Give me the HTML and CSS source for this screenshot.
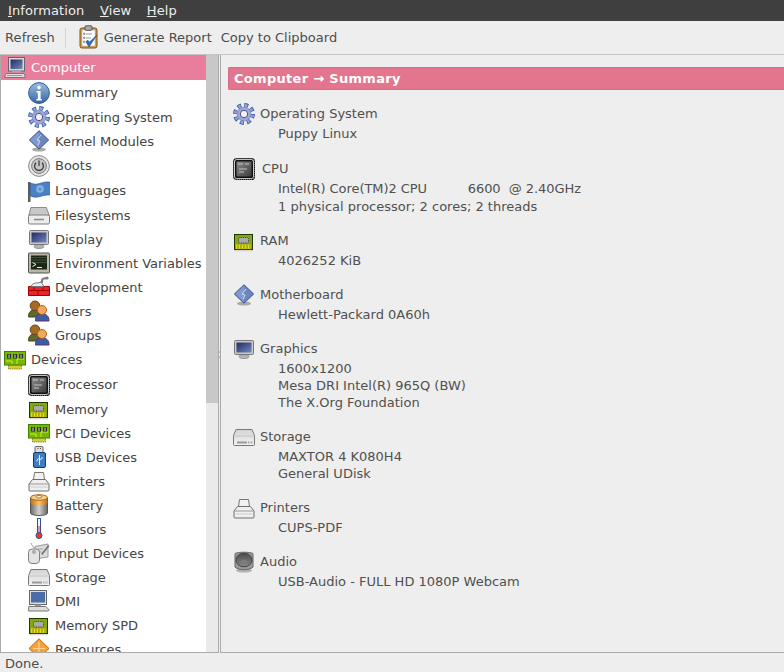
FILE: index.html
```html
<!DOCTYPE html>
<html lang="en">
<head>
<meta charset="utf-8">
<title>System Information</title>
<link rel="stylesheet" href="styles.css">
</head>
<body>
<svg class="defs" xmlns="http://www.w3.org/2000/svg">
<defs>
<linearGradient id="gBlue" x1="0" y1="0" x2="1" y2="1"><stop offset="0" stop-color="#232a63"/><stop offset="1" stop-color="#7288bc"/></linearGradient>
<linearGradient id="gInfo" x1="0" y1="0" x2="0" y2="1"><stop offset="0" stop-color="#9dbde4"/><stop offset="1" stop-color="#3465a4"/></linearGradient>
<linearGradient id="gGrey" x1="0" y1="0" x2="1" y2="0"><stop offset="0" stop-color="#6a6a6a"/><stop offset=".5" stop-color="#d0d0d0"/><stop offset="1" stop-color="#666"/></linearGradient>
<linearGradient id="gOrange" x1="0" y1="0" x2="1" y2="0"><stop offset="0" stop-color="#b86f1c"/><stop offset=".5" stop-color="#fbc46a"/><stop offset="1" stop-color="#b86f1c"/></linearGradient>
<linearGradient id="gChip" x1="0" y1="0" x2="1" y2="1"><stop offset="0" stop-color="#8c8c8c"/><stop offset="1" stop-color="#3c3c3c"/></linearGradient>
<linearGradient id="gDisk" x1="0" y1="0" x2="0" y2="1"><stop offset="0" stop-color="#d4d4d4"/><stop offset="1" stop-color="#f2f2f2"/></linearGradient>
<linearGradient id="gSpk" x1="0" y1="0" x2="0" y2="1"><stop offset="0" stop-color="#4a4a4a"/><stop offset="1" stop-color="#8a8a8a"/></linearGradient>
<symbol id="computer" viewBox="0 0 22 22"><rect x="4.500" y=".5" width="16" height="13.500" fill="#d8d8d8" stroke="#666"/><rect x="6.500" y="2.500" width="12" height="9.500" fill="url(#gBlue)"/><rect x="8" y="14" width="9" height="1.500" fill="#aaa"/><path d="M2 16.500h18l1.500 4H.5z" fill="#ddd" stroke="#777"/><path d="M3 18.500h15" stroke="#999"/></symbol>
<symbol id="info" viewBox="0 0 22 22"><circle cx="11" cy="11" r="10.400" fill="url(#gInfo)" stroke="#2c5a99"/><circle cx="11" cy="5.600" r="1.800" fill="#fff"/><path d="M8.600 9h4v8h1.200v1.400H8.400V17h1.400v-6.600H8.600z" fill="#fff"/></symbol>
<symbol id="gear" viewBox="0 0 22 22"><circle cx="11" cy="11" r="8.500" fill="none" stroke="#3a66b4" stroke-width="5" stroke-dasharray="3.800 2.876"/><circle cx="11" cy="11" r="8.500" fill="none" stroke="#9da3d6" stroke-width="3" stroke-dasharray="2.200 4.476" stroke-dashoffset="-.8"/><circle cx="11" cy="11" r="7" fill="#a0a6d8" stroke="#6f7fc0" stroke-width=".6"/><circle cx="11" cy="11" r="3.700" fill="#f2f2f2" stroke="#50508a"/></symbol>
<symbol id="module" viewBox="0 0 22 22"><ellipse cx="11" cy="19.500" rx="7" ry="2" fill="#aaa"/><path d="M11 .8 20.600 10 11 19.200 1.400 10z" fill="#8099cf" stroke="#2f4a86"/><path d="M11 .8 20.600 10 11 19.200z" fill="#4e6cab" opacity=".4"/><path d="M13 5 9 10l3 1-2 4" fill="none" stroke="#d4def4" stroke-width="1"/></symbol>
<symbol id="boot" viewBox="0 0 22 22"><circle cx="11" cy="11" r="10.400" fill="#e6e6e6" stroke="#888"/><circle cx="11" cy="11" r="7.400" fill="#c6c6c6" stroke="#777"/><path d="M8 7.800a4.400 4.400 0 1 0 6 0M11 5.500V11" fill="none" stroke="#333" stroke-width="1.200"/></symbol>
<symbol id="flag" viewBox="0 0 22 22"><path d="M0 2h2.500v20H0z" fill="#5c5c5c"/><path d="M2.500 3c3.500 1.500 6 1.500 9 .5s6-1.800 10-1.500v13c-4-.3-6.500 .6-9.500 1.500s-6 1-9.500-.5z" fill="#4b82c5" stroke="#2a5a96" stroke-width=".7"/><circle cx="12" cy="9" r="3.800" fill="#8db3df"/><circle cx="12" cy="9" r="1.800" fill="#5f93d0"/></symbol>
<symbol id="hdd" viewBox="0 0 22 22"><path d="M2.800 3.500h15.500l3 8H.8z" fill="#c8c8c8" stroke="#8a8a8a"/><rect x=".5" y="11" width="21" height="9" rx="1.500" fill="#ececec" stroke="#7c7c7c"/><path d="M6 15.500h10" stroke="#888" stroke-width="1.500"/></symbol>
<symbol id="display" viewBox="0 0 22 22"><ellipse cx="11" cy="18.500" rx="5" ry="2" fill="#b4b4b4" stroke="#999"/><rect x="1.500" y="2.500" width="19" height="14" rx="1" fill="#c9c9c9" stroke="#777"/><rect x="3.500" y="4.500" width="15" height="10" fill="url(#gBlue)"/></symbol>
<symbol id="terminal" viewBox="0 0 22 22"><rect x=".5" y="1" width="21" height="20" rx="1" fill="#b7b7a9" stroke="#555"/><rect x="3" y="3.500" width="16" height="14" fill="#1b2416"/><path d="M3 5.500h16M3 8h16M3 10.500h16" stroke="#3f5034"/><path d="M4.500 10.500 8 12.500 4.500 14.500M9 15.500h5" fill="none" stroke="#eee" stroke-width="1"/></symbol>
<symbol id="dev" viewBox="0 0 22 22"><path d="M.5 10.500h21v9H.5z" fill="#e8262a" stroke="#a40000"/><path d="M0 14.500h22M6 10.500v4M15 10.500v4M10 14.500v5" stroke="#a40000"/><path d="M3 10.500c1-3 4-4 7-3.500l3-1 3 4.500z" fill="#eee" stroke="#777"/><path d="M13 6.500l1-4 6-1.500v2h-4.800l-1 4" fill="#999" stroke="#666" stroke-width=".8"/></symbol>
<symbol id="users" viewBox="0 0 22 22"><path d="M.5 17c0-5 2-7 6.500-7s7 2 7 7z" fill="#5c6a2e" stroke="#3f4a1e"/><circle cx="7" cy="5.800" r="4.800" fill="#a46a24" stroke="#6a4012"/><path d="M7.500 21c0-5 2-7 6.500-7s7 2 7 7z" fill="#3560a8" stroke="#6a2a70"/><circle cx="14" cy="10" r="4.500" fill="#f4a95a" stroke="#a8651f"/></symbol>
<symbol id="card" viewBox="0 0 22 22"><path d="M4.500 16h13v4h-13z" fill="#d4cd3a" stroke="#8a8a20" stroke-dasharray="1.500 .8"/><rect x=".5" y="2.500" width="21" height="13.500" fill="#74b800" stroke="#3f8200"/><path d="M2 12h6v3M20 10h-7v5" fill="none" stroke="#d6e83a"/><rect x="3" y="5" width="4" height="4.500" fill="#2a2a2a"/><rect x="9" y="5" width="4" height="4.500" fill="#2a2a2a"/><rect x="15" y="5" width="4" height="4.500" fill="#2a2a2a"/><path d="M5 5.500v3.500M11 5.500v3.500M17 5.500v3.500" stroke="#ddd"/></symbol>
<symbol id="cpu" viewBox="0 0 22 22"><rect x=".6" y=".6" width="20.800" height="20.800" rx="3" fill="#fff" stroke="#000" stroke-width="1.200"/><rect x=".6" y=".6" width="20.800" height="20.800" rx="3" fill="none" stroke="#fff" stroke-width=".6" stroke-dasharray=".9 1.100"/><rect x="2" y="2" width="18" height="18" rx="1.500" fill="#111"/><rect x="3.500" y="3.500" width="15" height="15" rx="1" fill="url(#gChip)"/><path d="M5 6h5M12 6h4M6 11h8M6 14h5" stroke="#c4c4c4"/></symbol>
<symbol id="ram" viewBox="0 0 22 22"><rect x="1.500" y="4.500" width="18" height="15" fill="#83aa0a" stroke="#1e3a00"/><path d="M3 14.500h15V19H3z" fill="#e8d81a"/><path d="M5 14.500v5M8 14.500v5M11 14.500v5M14 14.500v5M17 14.500v5" stroke="#83880a"/><rect x="5.500" y="7.500" width="10" height="5.500" rx="1" fill="#aaa" stroke="#444" stroke-dasharray="1 .8"/><path d="M2 20.800h18" stroke="#ccc"/></symbol>
<symbol id="usb" viewBox="0 0 22 22"><rect x="7" y=".5" width="8" height="6" rx="1" fill="#ddd" stroke="#666"/><path d="M9.500 2.500h1M12 2.500h1" stroke="#555"/><rect x="5.500" y="6.500" width="12" height="15" rx="1.500" fill="#3f7cc0" stroke="#173a68"/><path d="M11.500 9v10M11.500 12 9 14v1.500M11.500 14l2.500-1.500V11" fill="none" stroke="#e6eefa"/></symbol>
<symbol id="printer" viewBox="0 0 22 22"><path d="M5.500 9.500 6.500 2.500h9l1 7z" fill="#f1f1f1" stroke="#777"/><path d="M4.500 9.500h13l3.500 4.500v6a1 1 0 0 1-1 1H2a1 1 0 0 1-1-1v-6z" fill="#efefef" stroke="#6e6e6e"/><path d="M1.500 14h19" stroke="#999"/><path d="M2.500 17h17" stroke="#ccc"/></symbol>
<symbol id="battery" viewBox="0 0 22 22"><path d="M2.500 3.500h17V19c0 1.500-4 2.500-8.500 2.500S2.500 20.500 2.500 19z" fill="url(#gGrey)" stroke="#555"/><path d="M2.500 3.500h17V9c0 1.500-4 2.500-8.500 2.500S2.500 10.500 2.500 9z" fill="url(#gOrange)"/><ellipse cx="11" cy="3.500" rx="8.500" ry="2.800" fill="#f7cf88" stroke="#a86a1c"/><ellipse cx="11" cy="2.800" rx="3" ry="1.300" fill="#fff2d8" stroke="#b07a30"/></symbol>
<symbol id="sensor" viewBox="0 0 22 22"><rect x="9.500" y=".5" width="3" height="15" fill="#f4f4ff" stroke="#3a4c96"/><rect x="10.500" y="8" width="1" height="7" fill="#e03030"/><circle cx="11" cy="17.500" r="3" fill="#e83838" stroke="#3a4c96"/></symbol>
<symbol id="input" viewBox="0 0 22 22"><path d="M7 4.500 20 2v13L7 17z" fill="#dcdcdc" stroke="#999"/><path d="M10 7h5M10 10h4" stroke="#aaa"/><path d="M13 12 20 3l1.500 1-7 9z" fill="#777"/><path d="M3 1c1 3 2 3 3 5" fill="none" stroke="#999"/><rect x=".5" y="7" width="11" height="14.500" rx="3.500" fill="#e4e4e4" stroke="#808080"/><circle cx="6" cy="10" r="2" fill="#aaa"/></symbol>
<symbol id="storage" viewBox="0 0 22 22"><path d="M3 3.500h16l2.500 6v9a1 1 0 0 1-1 1h-19a1 1 0 0 1-1-1v-9z" fill="url(#gDisk)" stroke="#777"/><path d="M.7 10h20.600" stroke="#c4c4c4"/><path d="M4 16.500h10" stroke="#999" stroke-width="2"/><path d="M15 16.500h5" stroke="#aaa" stroke-width="2" stroke-dasharray="1 .6"/></symbol>
<symbol id="dmi" viewBox="0 0 22 22"><rect x="1.500" y=".5" width="17" height="14" fill="#ddd" stroke="#666"/><rect x="3" y="2" width="14" height="10.500" fill="#4a6da8"/><rect x="7" y="14.500" width="6" height="1.500" fill="#999"/><path d="M.8 16.500h17l3.500 3.500-1 1H.5z" fill="#ddd" stroke="#777"/></symbol>
<symbol id="resources" viewBox="0 0 22 22"><path d="M11 .8 21 10.500 11 20 1 10.500z" fill="#f4a33c" stroke="#c8620a"/><path d="M11 4v13M5 10.500h12" stroke="#fbd48c" stroke-width="1.200"/></symbol>
<symbol id="audio" viewBox="0 0 22 22"><ellipse cx="11" cy="19.500" rx="8" ry="2" fill="#b0b0b0"/><path d="M2 2.500C5 .8 17 .8 20 2.500V16C17 19.500 5 19.500 2 16z" fill="#9a9a9a" stroke="#666"/><ellipse cx="11" cy="9" rx="8" ry="6.800" fill="url(#gSpk)" stroke="#444"/><ellipse cx="11" cy="11" rx="3.500" ry="2.500" fill="#7c7c7c"/></symbol>
<symbol id="report" viewBox="0 0 21 25"><rect x="1" y="3" width="17" height="20" rx="2" fill="#d79a45" stroke="#7c5212"/><rect x="3" y="5" width="13" height="16" fill="#fff" stroke="#aaa" stroke-width=".5"/><rect x="6" y=".8" width="7" height="4.500" rx="1" fill="#aaa" stroke="#555"/><path d="M7 9h6M7 13h5M7 17h3" stroke="#999"/><path d="M4.500 8h1.500v1.500H4.500zM4.500 12h1.500v1.500H4.500zM4.500 16h1.500v1.500H4.500z" fill="none" stroke="#666" stroke-width=".6"/><path d="M7 17l3 5 8-12-7.500 7-2-2z" fill="#2d6cc0" stroke="#17448a" stroke-width=".5"/></symbol>
</defs>
</svg>

<header class="menubar">
  <span class="menu"><u>I</u>nformation</span>
  <span class="menu"><u>V</u>iew</span>
  <span class="menu"><u>H</u>elp</span>
</header>

<nav class="toolbar">
  <span class="tool tool-refresh">Refresh</span>
  <span class="tool-sep"></span>
  <svg class="report-icon"><use href="#report"/></svg>
  <span class="tool tool-report">Generate Report</span>
  <span class="tool tool-copy">Copy to Clipboard</span>
</nav>

<main class="panes">
  <aside class="side">
    <div class="tree">
      <div class="row top tall sel"><svg class="ic"><use href="#computer"/></svg><span>Computer</span></div>
      <div class="row tall"><svg class="ic"><use href="#info"/></svg><span>Summary</span></div>
      <div class="row"><svg class="ic"><use href="#gear"/></svg><span>Operating System</span></div>
      <div class="row"><svg class="ic"><use href="#module"/></svg><span>Kernel Modules</span></div>
      <div class="row tall"><svg class="ic"><use href="#boot"/></svg><span>Boots</span></div>
      <div class="row tall"><svg class="ic"><use href="#flag"/></svg><span>Languages</span></div>
      <div class="row"><svg class="ic"><use href="#hdd"/></svg><span>Filesystems</span></div>
      <div class="row"><svg class="ic"><use href="#display"/></svg><span>Display</span></div>
      <div class="row"><svg class="ic"><use href="#terminal"/></svg><span>Environment Variables</span></div>
      <div class="row"><svg class="ic"><use href="#dev"/></svg><span>Development</span></div>
      <div class="row"><svg class="ic"><use href="#users"/></svg><span>Users</span></div>
      <div class="row"><svg class="ic"><use href="#users"/></svg><span>Groups</span></div>
      <div class="row top tall"><svg class="ic"><use href="#card"/></svg><span>Devices</span></div>
      <div class="row tall"><svg class="ic"><use href="#cpu"/></svg><span>Processor</span></div>
      <div class="row"><svg class="ic"><use href="#ram"/></svg><span>Memory</span></div>
      <div class="row"><svg class="ic"><use href="#card"/></svg><span>PCI Devices</span></div>
      <div class="row"><svg class="ic"><use href="#usb"/></svg><span>USB Devices</span></div>
      <div class="row"><svg class="ic"><use href="#printer"/></svg><span>Printers</span></div>
      <div class="row"><svg class="ic"><use href="#battery"/></svg><span>Battery</span></div>
      <div class="row"><svg class="ic"><use href="#sensor"/></svg><span>Sensors</span></div>
      <div class="row"><svg class="ic"><use href="#input"/></svg><span>Input Devices</span></div>
      <div class="row"><svg class="ic"><use href="#storage"/></svg><span>Storage</span></div>
      <div class="row"><svg class="ic"><use href="#dmi"/></svg><span>DMI</span></div>
      <div class="row"><svg class="ic"><use href="#ram"/></svg><span>Memory SPD</span></div>
      <div class="row"><svg class="ic"><use href="#resources"/></svg><span>Resources</span></div>
    </div>
    <div class="scrollbar"><div class="thumb"></div></div>
  </aside>
  <div class="splitter"><div class="grip"></div></div>
  <section class="content">
    <h1 class="title">Computer → Summary</h1>
    <div class="group group-first">
      <div class="head"><svg class="ic"><use href="#gear"/></svg><span>Operating System</span></div>
      <div class="val">Puppy Linux</div>
    </div>
    <div class="group">
      <div class="head head-wide"><svg class="ic"><use href="#cpu"/></svg><span>CPU</span></div>
      <div class="val val-cpu">Intel(R) Core(TM)2 CPU          6600  @ 2.40GHz</div>
      <div class="val val-gap">1 physical processor; 2 cores; 2 threads</div>
    </div>
    <div class="group">
      <div class="head"><svg class="ic"><use href="#ram"/></svg><span>RAM</span></div>
      <div class="val">4026252 KiB</div>
    </div>
    <div class="group">
      <div class="head"><svg class="ic"><use href="#module"/></svg><span>Motherboard</span></div>
      <div class="val">Hewlett-Packard 0A60h</div>
    </div>
    <div class="group">
      <div class="head"><svg class="ic"><use href="#display"/></svg><span>Graphics</span></div>
      <div class="val">1600x1200</div>
      <div class="val">Mesa DRI Intel(R) 965Q (BW)</div>
      <div class="val">The X.Org Foundation</div>
    </div>
    <div class="group">
      <div class="head"><svg class="ic"><use href="#storage"/></svg><span>Storage</span></div>
      <div class="val">MAXTOR 4 K080H4</div>
      <div class="val">General UDisk</div>
    </div>
    <div class="group">
      <div class="head"><svg class="ic"><use href="#printer"/></svg><span>Printers</span></div>
      <div class="val">CUPS-PDF</div>
    </div>
    <div class="group">
      <div class="head"><svg class="ic"><use href="#audio"/></svg><span>Audio</span></div>
      <div class="val">USB-Audio - FULL HD 1080P Webcam</div>
    </div>
  </section>
</main>

<footer class="status">Done.</footer>
</body>
</html>
```
FILE: styles.css
```css
* { box-sizing: border-box; }
html, body { margin: 0; height: 100%; }
body {
  display: flex;
  flex-direction: column;
  height: 672px;
  overflow: hidden;
  background: #eeeeee;
  color: #4c4c4c;
  font: 13px/17px "DejaVu Sans", sans-serif;
}
.defs { position: absolute; width: 0; height: 0; }

.menubar {
  flex: none;
  display: flex;
  height: 21px;
  padding: 0 0 1px 8px;
  gap: 15.600px;
  align-items: center;
  background: #3f3f3f;
  color: #eeeeee;
}
.menu { letter-spacing: .1px; }

.toolbar {
  flex: none;
  display: flex;
  align-items: center;
  height: 34px;
  padding-left: 5px;
  background: #eeeeee;
  border-bottom: 1px solid #c4c4c4;
}
.tool-refresh { letter-spacing: .1px; }
.tool-sep { width: 1px; height: 20px; margin: 0 13px 0 10px; background: #d4d4d4; }
.report-icon { width: 21px; height: 25px; flex: none; }
.tool-report { margin-left: 4px; }
.tool-copy { margin-left: 9px; }

.panes { flex: 1; min-height: 0; display: flex; }

.side {
  flex: none;
  width: 219px;
  display: flex;
  border: 1px solid #ababab;
  border-top: 0;
}
.tree { flex: 1; min-width: 0; overflow: hidden; background: #ffffff; color: #444444; }
.row { display: flex; align-items: center; height: 24px; padding-left: 27px; white-space: nowrap; }
.row.tall { height: 25px; }
.row.top { padding-left: 3px; }
.row .ic { margin-right: 5px; }
.row.sel { background: #e87e9b; color: #ffffff; }
.ic { width: 22px; height: 22px; flex: none; }

.scrollbar { flex: none; width: 12px; background: #eaeaea; }
.thumb { height: 348px; background: #c8c8c8; }

.splitter { flex: none; width: 1px; display: flex; align-items: center; }
.grip { width: 1px; height: 7px; border-top: 2px solid #bdbdbd; border-bottom: 2px solid #bdbdbd; }

.content {
  flex: 1;
  min-width: 0;
  overflow: hidden;
  padding: 12px 0 0 7px;
  border-left: 1px solid #ababab;
  border-bottom: 1px solid #ababab;
  color: #505050;
}
.title {
  margin: 0 0 12px;
  height: 23px;
  padding-left: 5px;
  background: #e3758f;
  border: 1px solid #d76a85;
  border-right: 0;
  border-radius: 2px 0 0 2px;
  color: #ffffff;
  font-size: 13px;
  font-weight: bold;
  line-height: 21px;
  letter-spacing: .3px;
}
.group { margin-bottom: 14px; padding-left: 5px; }
.group-first { margin-bottom: 15px; }
.head { display: flex; align-items: center; height: 23px; }
.head .ic { margin-right: 5px; }
.head-wide .ic { margin-right: 7px; }
.val { padding-left: 45px; white-space: pre; }
.val-cpu { letter-spacing: -.06px; }
.val-gap { margin-top: 1px; }

.status { flex: none; height: 19px; padding-left: 5px; line-height: 21px; background: #eeeeee; }
```
